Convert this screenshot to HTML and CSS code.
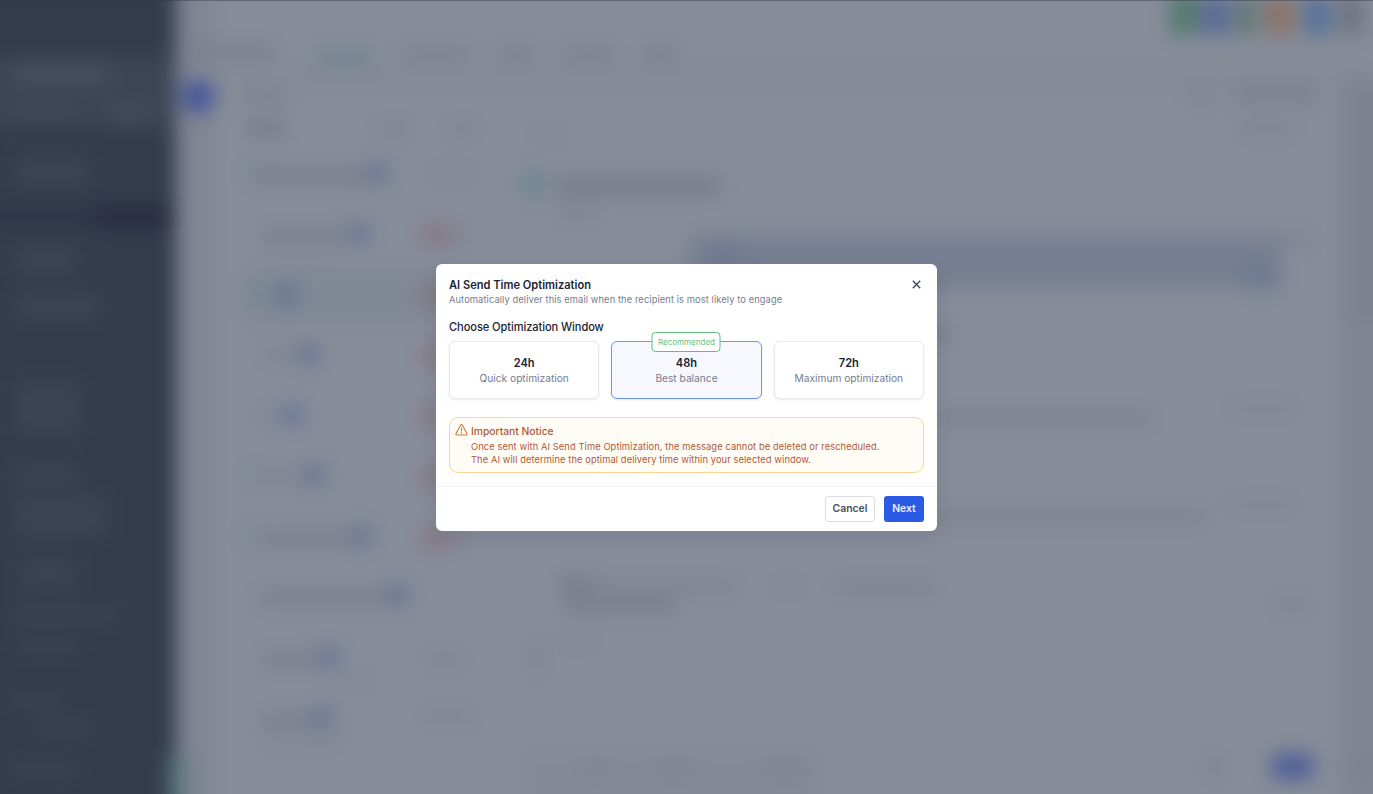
FILE: index.html
```html
<!DOCTYPE html>
<html lang="en">
<head>
<meta charset="utf-8">
<title>AI Send Time Optimization</title>
<link rel="stylesheet" href="styles.css">
</head>
<body>
<svg class="backdrop" viewBox="0 0 1373 794" aria-hidden="true">
  <defs>
    <filter id="soft" filterUnits="userSpaceOnUse" x="-60" y="-60" width="1493" height="914" color-interpolation-filters="sRGB">
      <feGaussianBlur stdDeviation="9.5"/>
    </filter>
  </defs>
  <g filter="url(#soft)">
    <rect x="-60" y="-60" width="1493" height="914" fill="#868c98"/>
    <rect x="176" y="-60" width="36" height="914" fill="#7f8593"/>
    <rect x="200" y="70" width="1173" height="14" fill="#828995"/>
    <rect x="1341" y="80" width="100" height="780" fill="#808591"/>
    <rect x="1345" y="84" width="100" height="240" fill="#7c828e"/>
    <rect x="-60" y="-60" width="236" height="914" fill="#333c4d"/>
    <!-- sidebar -->
    <rect x="-60" y="56" width="236" height="72" fill="#3c4555"/>
    <rect x="14" y="68" width="96" height="12" fill="#4d5664"/>
    <rect x="112" y="106" width="34" height="13" fill="#485160"/>
    <rect x="14" y="104" width="60" height="12" fill="#424b5a"/>
    <rect x="-60" y="208" width="154" height="18" fill="#303649"/>
    <rect x="94" y="206" width="80" height="22" fill="#2a2e42"/>
    <g fill="#3b4455">
      <rect x="14" y="155" width="74" height="34"/>
      <rect x="14" y="244" width="64" height="30"/>
      <rect x="14" y="292" width="88" height="28"/>
      <rect x="14" y="380" width="66" height="56"/>
      <rect x="14" y="464" width="66" height="22"/>
      <rect x="14" y="496" width="94" height="42"/>
      <rect x="20" y="560" width="56" height="30"/>
      <rect x="14" y="606" width="106" height="18"/>
      <rect x="14" y="640" width="66" height="14"/>
      <rect x="8" y="694" width="56" height="14"/>
      <rect x="34" y="720" width="60" height="16"/>
      <rect x="10" y="762" width="66" height="16"/>
    </g>
    <rect x="168" y="756" width="16" height="50" fill="#55757a"/>
    <rect x="184" y="82" width="29" height="29" rx="6" fill="#43539a"/>
    <!-- navigation -->
    <g fill="#787e89">
      <rect x="192" y="46" width="84" height="11"/>
      <rect x="400" y="50" width="68" height="9"/>
      <rect x="496" y="50" width="36" height="10"/>
      <rect x="560" y="50" width="54" height="9"/>
      <rect x="644" y="50" width="36" height="10"/>
      <rect x="244" y="94" width="44" height="9"/>
      <rect x="248" y="122" width="38" height="12" fill="#717784"/>
      <rect x="376" y="125" width="34" height="7"/>
      <rect x="448" y="125" width="28" height="7"/>
    </g>
    <rect x="316" y="49" width="56" height="18" fill="#768593"/>
    <!-- header actions -->
    <rect x="1170" y="-8" width="29" height="43" rx="5" fill="#567a70"/>
    <rect x="1201" y="-4" width="29" height="39" rx="5" fill="#5b6b98"/>
    <rect x="1234" y="-4" width="25" height="39" rx="5" fill="#657a7b"/>
    <rect x="1266" y="-4" width="28" height="39" rx="5" fill="#8b7267"/>
    <rect x="1303" y="-4" width="28" height="39" rx="5" fill="#567298"/>
    <rect x="1340" y="-4" width="22" height="39" rx="5" fill="#6b707d"/>
    <rect x="1190" y="91" width="24" height="10" fill="#797f8a"/>
    <rect x="1234" y="90" width="84" height="12" fill="#797f8a"/>
    <rect x="1236" y="124" width="60" height="9" fill="#7d838e"/>
    <!-- conversation list -->
    <rect x="244" y="272" width="200" height="48" fill="#7f8894"/>
    <g fill="#757b87">
      <rect x="256" y="170" width="112" height="12"/>
      <rect x="262" y="230" width="86" height="10"/>
      <rect x="262" y="350" width="38" height="9" fill="#7b808c"/>
      <rect x="258" y="411" width="26" height="9" fill="#7c8196"/>
      <rect x="262" y="472" width="44" height="9" fill="#7b808c"/>
      <rect x="264" y="533" width="84" height="11"/>
      <rect x="266" y="592" width="122" height="11"/>
      <rect x="262" y="654" width="54" height="11"/>
      <rect x="262" y="715" width="54" height="11"/>
      <rect x="262" y="249" width="80" height="5" fill="#7c828e"/>
      <rect x="340" y="676" width="36" height="6" fill="#7c828e"/>
      <rect x="262" y="737" width="80" height="6" fill="#7c828e"/>
      <rect x="426" y="654" width="38" height="9" fill="#7c828e"/>
      <rect x="424" y="712" width="50" height="9" fill="#7c828e"/>
      <rect x="432" y="168" width="40" height="9" fill="#7f8591"/>
    </g>
    <g fill="#677495">
      <circle cx="378" cy="173" r="11"/><circle cx="360" cy="234" r="11"/>
      <circle cx="286" cy="295" r="12"/><circle cx="309" cy="354" r="11"/>
      <circle cx="293" cy="415" r="11"/><circle cx="315" cy="475" r="11"/>
      <circle cx="361" cy="536" r="11"/><circle cx="398" cy="595" r="11"/>
      <circle cx="329" cy="657" r="11"/><circle cx="323" cy="717" r="11"/>
    </g>
    <g fill="#748892">
      <circle cx="251" cy="173" r="7"/><circle cx="254" cy="294" r="10"/>
      <circle cx="253" cy="474" r="7"/><circle cx="252" cy="536" r="8"/>
      <circle cx="258" cy="599" r="6" fill="#7b8a90"/>
    </g>
    <g fill="#877580">
      <rect x="423" y="225" width="24" height="19"/>
      <rect x="423" y="286" width="24" height="19"/><rect x="423" y="346" width="24" height="19"/>
      <rect x="423" y="407" width="24" height="19"/><rect x="423" y="468" width="24" height="19"/>
      <rect x="423" y="529" width="24" height="19"/>
      <rect x="446" y="230" width="22" height="10" fill="#837f8b"/><rect x="446" y="534" width="22" height="9" fill="#837f8b"/>
    </g>
    <!-- conversation -->
    <circle cx="533" cy="184" r="12" fill="#6b8592"/>
    <rect x="556" y="179" width="164" height="15" fill="#737985"/>
    <rect x="556" y="206" width="42" height="11" fill="#7d838e"/>
    <rect x="534" y="132" width="30" height="8" fill="#7f8591"/>
    <rect x="690" y="236" width="590" height="52" fill="#767e91"/>
    <rect x="706" y="244" width="36" height="20" fill="#707991"/>
    <rect x="1280" y="232" width="34" height="18" fill="#808696"/>
    <rect x="1246" y="262" width="32" height="28" fill="#6e7a92"/>
    <rect x="930" y="328" width="22" height="12" fill="#757b87"/>
    <rect x="930" y="413" width="222" height="11" fill="#7b818c"/>
    <rect x="930" y="512" width="276" height="11" fill="#7c828d"/>
    <rect x="1230" y="404" width="66" height="9" fill="#7f8590"/>
    <rect x="1230" y="500" width="66" height="9" fill="#7f8590"/>
    <rect x="562" y="578" width="30" height="14" fill="#707682"/>
    <rect x="580" y="582" width="156" height="8" fill="#797f8b"/>
    <rect x="564" y="598" width="112" height="13" fill="#767c88"/>
    <rect x="836" y="582" width="98" height="9" fill="#787e8a"/>
    <rect x="768" y="584" width="40" height="6" fill="#7e8490"/>
    <rect x="564" y="638" width="30" height="8" fill="#7f8590"/>
    <rect x="528" y="640" width="14" height="36" fill="#808692"/>
    <rect x="1272" y="600" width="38" height="11" fill="#7f8590"/>
    <g fill="#7b818d">
      <rect x="582" y="764" width="30" height="9"/><rect x="652" y="764" width="44" height="9"/>
      <rect x="762" y="764" width="46" height="9"/><rect x="1202" y="762" width="26" height="11"/>
      <rect x="1344" y="758" width="30" height="18"/>
    </g>
    <rect x="524" y="754" width="292" height="60" fill="#7f8596" opacity=".4"/>
    <rect x="1272" y="754" width="41" height="25" rx="5" fill="#4d5e98"/>
  </g>
  <rect width="1373" height="1" fill="#2e2f45" opacity=".38"/>
</svg>
<main class="stage">
  <section class="dialog" role="dialog" aria-labelledby="title">
    <div class="body">
      <header class="head">
        <div>
          <h1 class="title" id="title">AI Send Time Optimization</h1>
          <p class="subtitle">Automatically deliver this email when the recipient is most likely to engage</p>
        </div>
        <button class="close" aria-label="Close">
          <svg width="9" height="9" viewBox="0 0 9 9"><path d="M.8.8 8.2 8.2M8.2.8.8 8.2" fill="none" stroke="currentColor" stroke-width="1.3"/></svg>
        </button>
      </header>
      <h2 class="label">Choose Optimization Window</h2>
      <div class="options">
        <div class="option"><strong>24h</strong><span>Quick optimization</span></div>
        <div class="option selected"><em class="badge">Recommended</em><strong>48h</strong><span>Best balance</span></div>
        <div class="option"><strong>72h</strong><span>Maximum optimization</span></div>
      </div>
      <div class="notice">
        <svg class="warn" width="13" height="12" viewBox="0 0 13 12"><path d="M5.75 1.05a.85.85 0 0 1 1.5 0l4.8 8.6a.85.85 0 0 1-.75 1.25H1.7a.85.85 0 0 1-.75-1.25z" fill="none" stroke="currentColor" stroke-width="1.05" stroke-linejoin="round"/><path d="M6.5 4v3" stroke="currentColor" stroke-width="1.05" stroke-linecap="round"/><circle cx="6.5" cy="8.9" r=".65" fill="currentColor"/></svg>
        <div>
          <h3 class="notice-title">Important Notice</h3>
          <p class="notice-text">Once sent with AI Send Time Optimization, the message cannot be deleted or rescheduled.<br>The AI will determine the optimal delivery time within your selected window.</p>
        </div>
      </div>
    </div>
    <footer class="foot">
      <button class="btn cancel">Cancel</button>
      <button class="btn next">Next</button>
    </footer>
  </section>
</main>
</body>
</html>
```
FILE: styles.css
```css
* { box-sizing: border-box; }
body { margin: 0; height: 794px; overflow: hidden; background: #868c98; font-family: Inter, "Liberation Sans", sans-serif; }
h1, h2, h3, p { margin: 0; }
button { font: inherit; padding: 0; border: 0; background: none; }
.backdrop { position: absolute; inset: 0; width: 1373px; height: 794px; }
.stage { position: relative; height: 794px; display: flex; align-items: center; justify-content: center; }
.dialog { width: 501px; height: 267px; background: #fff; border-radius: 6px; box-shadow: 0 5px 16px rgba(40, 48, 70, .12); display: flex; flex-direction: column; }
.body { height: 223px; padding: 13px 13px 0; border-bottom: 1px solid #eef0f3; }
.head { display: flex; justify-content: space-between; align-items: flex-start; height: 42px; }
.title { font-size: 11.1px; line-height: 16px; font-weight: 600; color: #1c2333; }
.subtitle { font-size: 9.3px; line-height: 14px; letter-spacing: .1px; color: #757d8e; }
.close { width: 16px; height: 16px; display: grid; place-items: center; color: #3a4356; }
.label { font-size: 11.1px; line-height: 16px; letter-spacing: -.08px; font-weight: 500; color: #1c2333; margin-bottom: 6px; }
.options { display: grid; grid-template-columns: repeat(3, 1fr); gap: 12px; height: 58px; }
.option { position: relative; display: flex; flex-direction: column; align-items: center; padding-top: 14px; border: 1px solid #e9eaee; border-radius: 6px; box-shadow: 0 1px 2px rgba(20, 30, 50, .1); background: #fff; }
.option strong { font-size: 11.1px; line-height: 15px; font-weight: 600; color: #1c2333; }
.option span { font-size: 10.2px; line-height: 14px; color: #757d8e; }
.selected { border-color: #7496f0; background: #f6f8fe; }
.badge { position: absolute; top: -10px; left: 50%; transform: translateX(-50%); width: 69px; height: 20px; display: grid; place-items: center; border: 1px solid #64bd81; border-radius: 4px; background: #fff; color: #6abf84; font-size: 8px; font-style: normal; }
.notice { display: flex; gap: 3px; height: 56px; margin-top: 18px; padding: 6px 5px 0; border: 1px solid #f6d98f; border-radius: 9px; background: #fffcf5; color: #b05a35; }
.warn { flex: none; color: #cf7430; }
.notice-title { font-size: 10.3px; line-height: 15px; font-weight: 500; }
.notice-text { font-size: 9.3px; line-height: 13.4px; letter-spacing: .1px; white-space: nowrap; margin-top: 1px; }
.foot { flex: 1; display: flex; justify-content: flex-end; align-items: center; gap: 9px; padding: 0 13px; }
.btn { height: 26px; border-radius: 3px; font-size: 10.4px; font-weight: 600; }
.cancel { width: 50px; border: 1px solid #d9dee6; color: #464f62; }
.next { width: 40px; background: #2b5be5; color: #e9efff; }
```
